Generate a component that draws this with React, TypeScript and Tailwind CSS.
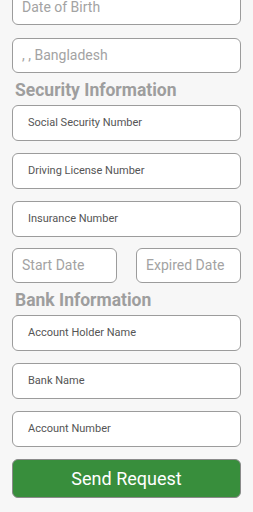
const bigFields = ['Social Security Number', 'Driving License Number', 'Insurance Number'];
const bankFields = ['Account Holder Name', 'Bank Name', 'Account Number'];

function BigInput({ label, className = '' }: { label: string; className?: string }) {
  return (
    <div
      className={`flex h-[35px] items-center rounded-[6px] border border-[#9c9c9c] bg-white px-[9px] text-[14px] text-[#a3a3a3] ${className}`}
    >
      {label}
    </div>
  );
}

function SmallInput({ label }: { label: string }) {
  return (
    <div className="flex h-[36px] items-center rounded-[6px] border border-[#9c9c9c] bg-white px-[15px] text-[11px] text-[#555555]">
      {label}
    </div>
  );
}

function SectionTitle({ children }: { children: string }) {
  return (
    <h2 className="mt-[7px] mb-[5px] pl-[3px] text-[17.5px] font-bold leading-[20px] text-[#9e9e9e]">
      {children}
    </h2>
  );
}

export default function App() {
  return (
    <div
      className="min-h-screen overflow-hidden bg-[#f7f7f7]"
      style={{ fontFamily: 'Roboto, "Noto Sans", sans-serif' }}
    >
      <div className="flex flex-col px-3">
        <BigInput label="Date of Birth" className="-mt-[10px]" />
        <BigInput label=", , Bangladesh" className="mt-[13px]" />

        <SectionTitle>Security Information</SectionTitle>
        <div className="flex flex-col gap-3">
          {bigFields.map((f) => (
            <SmallInput key={f} label={f} />
          ))}
        </div>
        <div className="mt-[11px] grid grid-cols-2 gap-[19px]">
          <BigInput label="Start Date" />
          <BigInput label="Expired Date" />
        </div>

        <SectionTitle>Bank Information</SectionTitle>
        <div className="flex flex-col gap-3">
          {bankFields.map((f) => (
            <SmallInput key={f} label={f} />
          ))}
        </div>

        <button className="mt-3 h-[39px] rounded-[6px] border border-[#8a8a8a] bg-[#388e3c] text-[18px] text-white">
          Send Request
        </button>
      </div>
    </div>
  );
}
